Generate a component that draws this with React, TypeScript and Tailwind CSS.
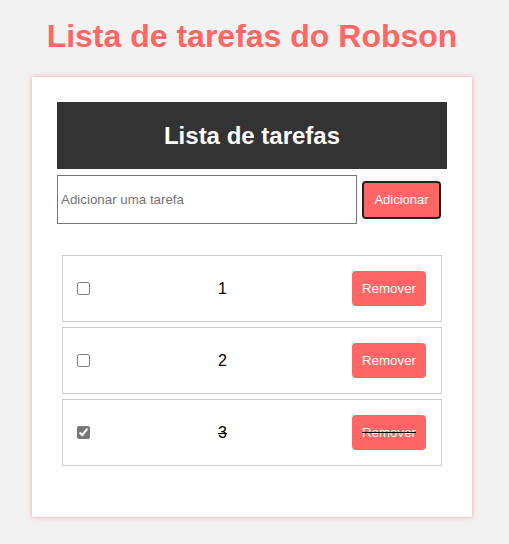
import { useState } from 'react'

type Task = { id: number; text: string; done: boolean }

export default function App() {
  const [tasks, setTasks] = useState<Task[]>([
    { id: 1, text: '1', done: false },
    { id: 2, text: '2', done: false },
    { id: 3, text: '3', done: true },
  ])

  const toggle = (id: number) =>
    setTasks(tasks.map((t) => (t.id === id ? { ...t, done: !t.done } : t)))

  return (
    <div className="min-h-[544px] bg-[#f2f2f2] font-['Liberation_Sans',Arial,sans-serif]">
      <div className="w-[504px] pt-[18px]">
        <h1 className="text-center text-[32px] font-bold leading-[37px] text-[#ff6666]">
          Lista de tarefas do Robson
        </h1>

        <div className="mx-auto mt-[22px] w-[440px] bg-white p-[25px] shadow-[0_0_5px_rgba(255,80,80,0.5)]">
          <div className="flex h-[67px] items-center justify-center bg-[#333333]">
            <h2 className="text-[24px] font-bold text-white">Lista de tarefas</h2>
          </div>

          <div className="mt-[6px] flex items-center gap-[5px]">
            <input
              type="text"
              placeholder="Adicionar uma tarefa"
              className="h-[49px] w-[300px] border border-[#767676] px-[3px] text-[13.33px] text-black placeholder:text-[#757575]"
            />
            <button className="h-[38px] w-[79px] rounded-[4px] border-2 border-[#222] bg-[#ff6666] text-[13px] text-white">
              Adicionar
            </button>
          </div>

          <ul className="mx-[5px] mt-[31px] mb-[26px] flex flex-col gap-[5px]">
            {tasks.map((t) => (
              <li
                key={t.id}
                className="flex h-[67px] items-center justify-between border border-[#cccccc] pl-[14px] pr-[15px]"
              >
                <input
                  type="checkbox"
                  checked={t.done}
                  onChange={() => toggle(t.id)}
                  className="m-0 h-[13px] w-[13px] accent-[#767676]"
                />
                <span className={`pl-[3px] text-[16px] text-black ${t.done ? 'line-through' : ''}`}>
                  {t.text}
                </span>
                <button
                  className={`h-[35px] w-[74px] rounded-[4px] bg-[#ff6666] text-[13.33px] text-white ${
                    t.done ? 'line-through decoration-black' : ''
                  }`}
                >
                  Remover
                </button>
              </li>
            ))}
          </ul>
        </div>
      </div>
    </div>
  )
}
